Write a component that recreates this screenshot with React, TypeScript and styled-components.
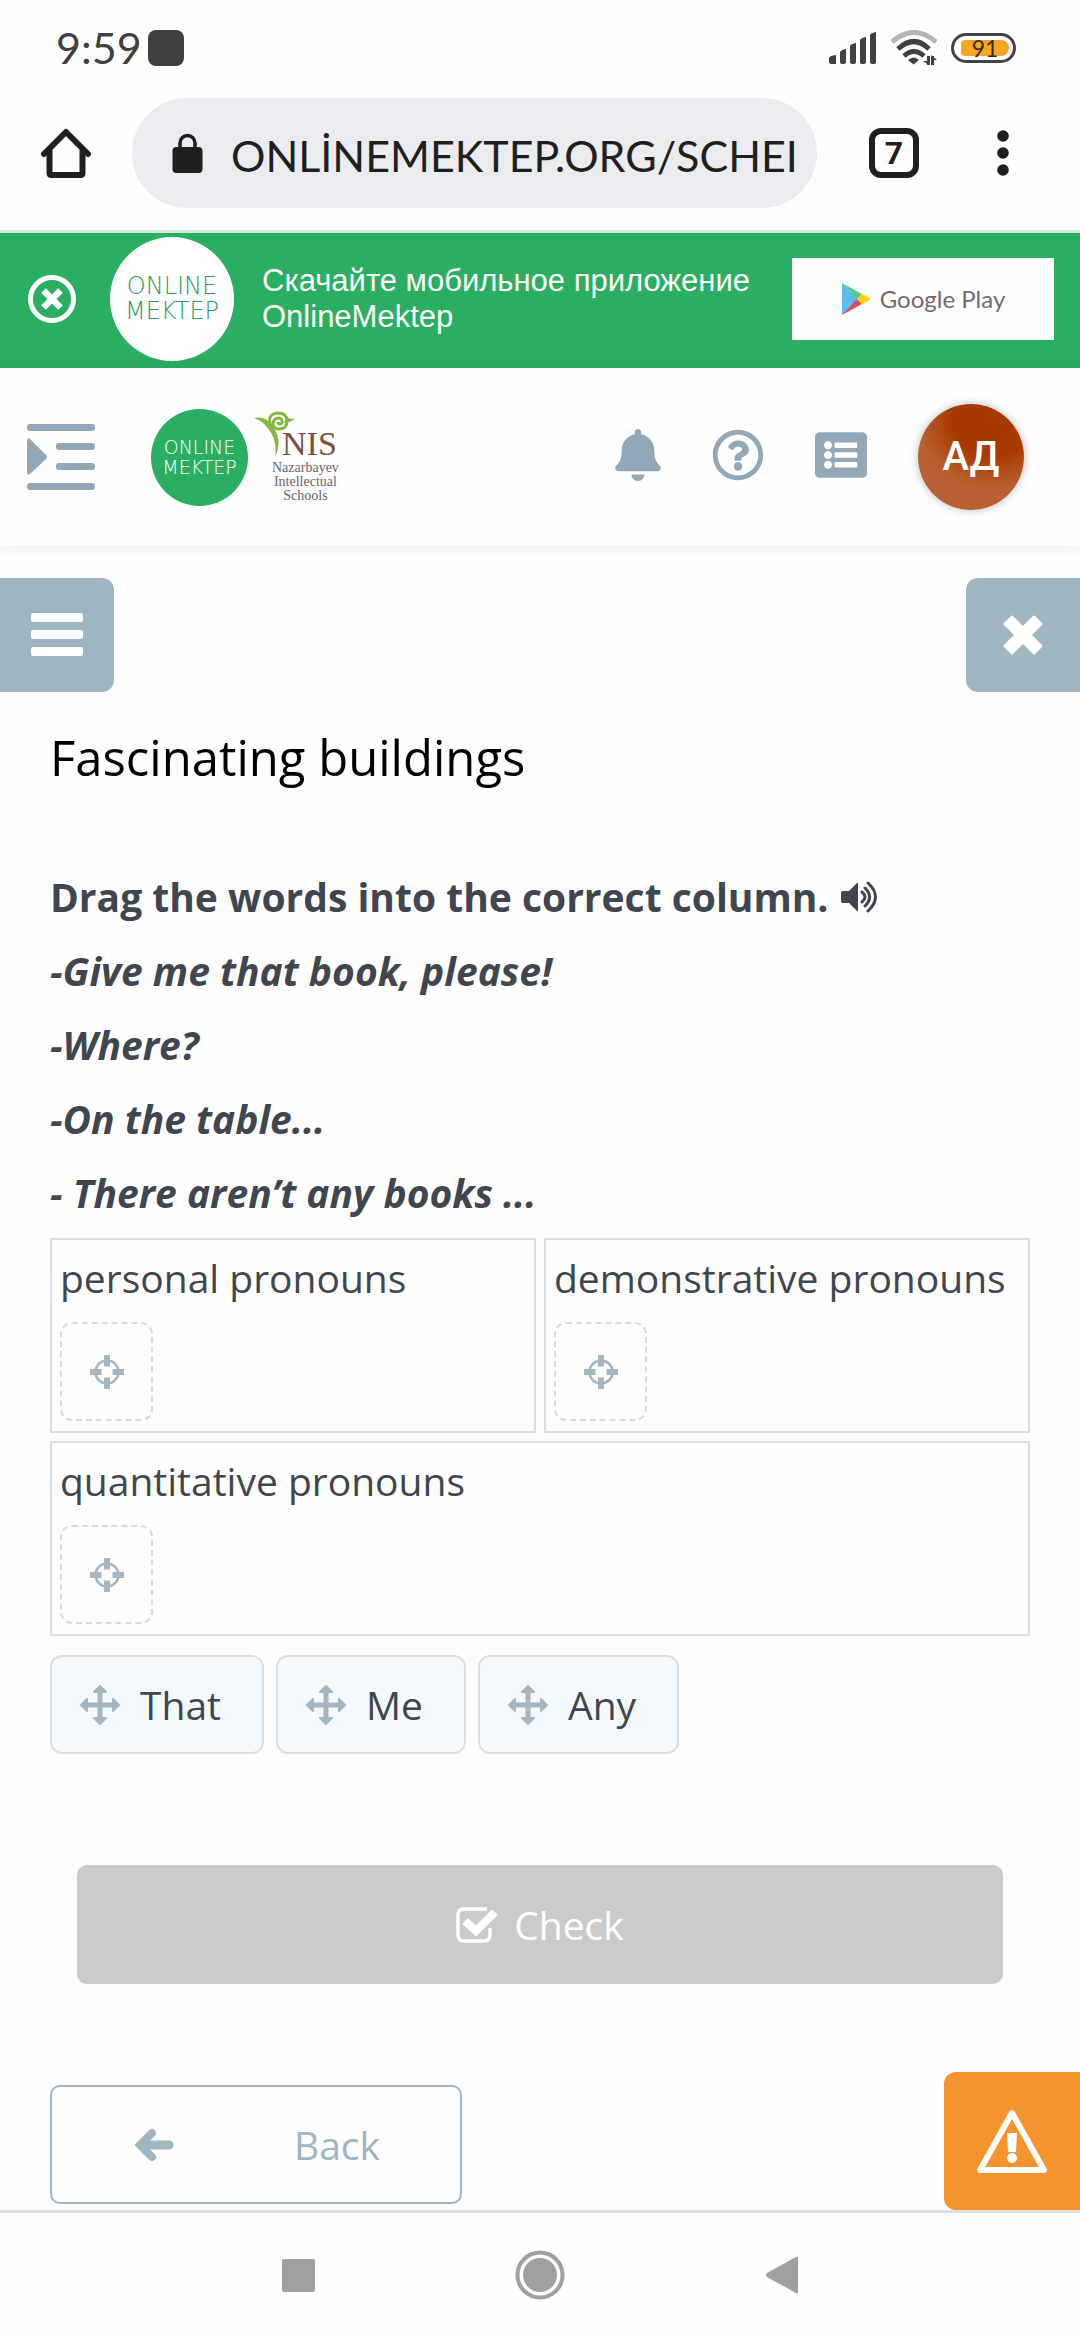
import React from "react";
import styled, { createGlobalStyle } from "styled-components";
import { FaBell, FaListAlt, FaRegQuestionCircle } from "react-icons/fa";

const uiFont = `"Open Sans", "Noto Sans", sans-serif`;

const GlobalStyle = createGlobalStyle`
  *, *::before, *::after { box-sizing: border-box; }
  body { margin: 0; background: #fefefe; font-family: ${uiFont}; color: #40464f; }
  button { font: inherit; color: inherit; border: 0; padding: 0; margin: 0; background: none; }
  p, h1, ul { margin: 0; padding: 0; }
  svg { display: block; flex: none; }
`;

const Screen = styled.div`
  display: flex;
  flex-direction: column;
  min-height: 100vh;
`;

const StatusBar = styled.div`
  display: flex;
  align-items: center;
  justify-content: space-between;
  height: 96px;
  padding: 0 64px 0 56px;
  color: #404040;
`;

const StatusGroup = styled.div<{ $gap: number }>`
  display: flex;
  align-items: center;
  gap: ${(p) => p.$gap}px;
`;

const Clock = styled.span`
  font-family: Lato, sans-serif;
  font-size: 43px;
  line-height: 48px;
`;

const BrowserBar = styled.div`
  display: flex;
  align-items: center;
  height: 134px;
  padding: 0 71px 20px 40px;
`;

const IconButton = styled.button`
  display: flex;
  align-items: center;
  justify-content: center;
`;

const AddressBar = styled.label`
  display: flex;
  align-items: center;
  gap: 28px;
  flex: 1;
  min-width: 0;
  height: 110px;
  margin: 0 52px 0 40px;
  padding: 0 20px 0 40px;
  border-radius: 55px;
  background: #ebecf0;
  color: #1f1f1f;
`;

const AddressInput = styled.input`
  flex: 1;
  min-width: 0;
  padding: 6px 0 0;
  border: 0;
  outline: 0;
  background: none;
  color: #1f1f1f;
  font-family: Lato, sans-serif;
  font-size: 43px;
  line-height: 48px;
`;

const TabsButton = styled(IconButton)`
  width: 50px;
  height: 50px;
  margin-right: 78px;
  border: 6px solid #1f1f1f;
  border-radius: 12px;
  color: #1f1f1f;
  font-family: Roboto, sans-serif;
  font-size: 32px;
  line-height: 36px;
  font-weight: 700;
`;

const Banner = styled.aside`
  display: flex;
  align-items: center;
  height: 138px;
  padding: 0 26px 4px 28px;
  border-top: 3px solid #d3ecdc;
  background: #2aae61;
  color: #ffffff;
`;

const LogoCircle = styled.div<{ $size: number; $inverse?: boolean }>`
  display: flex;
  flex-direction: column;
  align-items: center;
  justify-content: center;
  flex: none;
  width: ${(p) => p.$size}px;
  height: ${(p) => p.$size}px;
  border-radius: 50%;
  background: ${(p) => (p.$inverse ? "#2aae61" : "#ffffff")};
  color: ${(p) => (p.$inverse ? "#ffffff" : "#2f9a63")};
  font-family: "DejaVu Sans", sans-serif;
  font-weight: 200;
  font-size: ${(p) => (p.$size > 100 ? 24 : 19)}px;
  line-height: ${(p) => (p.$size > 100 ? 25 : 20)}px;
`;

const BannerLogo = styled(LogoCircle)`
  margin: 0 28px 0 34px;
`;

const BannerText = styled.p`
  flex: 1;
  font-family: "Liberation Sans", Arial, sans-serif;
  font-size: 31px;
  line-height: 36px;
`;

const PlayLink = styled.a`
  display: flex;
  align-items: center;
  justify-content: center;
  gap: 9px;
  width: 262px;
  height: 82px;
  background: #fdfefe;
  color: #77686c;
  font-family: Lato, sans-serif;
  font-size: 24px;
  line-height: 32px;
  text-decoration: none;
`;

const Header = styled.header`
  display: flex;
  align-items: center;
  height: 178px;
  padding: 0 56px 0 27px;
  background: #fefefe;
  box-shadow: 0 2px 16px rgba(0, 0, 0, 0.08);
  color: #92a8b9;
`;

const Brand = styled.div`
  display: flex;
  align-items: center;
  gap: 6px;
  margin-left: 56px;
`;

const NisLogo = styled.div`
  display: grid;
  grid-template-columns: 28px auto;
  align-items: end;
  font-family: "Liberation Serif", serif;
`;

const NisName = styled.span`
  color: #7a5040;
  font-size: 34px;
  line-height: 30px;
`;

const NisCaption = styled.span`
  grid-column: 1 / -1;
  padding: 2px 0 0 18px;
  color: #666666;
  font-size: 14px;
  line-height: 14px;
  text-align: center;
`;

const HeaderActions = styled.nav`
  display: flex;
  align-items: center;
  gap: 51px;
  margin-left: auto;
`;

const HeaderIcon = styled(IconButton)<{ $width: number }>`
  padding-bottom: 4px;

  svg {
    width: ${(p) => p.$width}px;
    height: 52px;
  }
`;

const Avatar = styled.button`
  width: 106px;
  height: 106px;
  border-radius: 50%;
  background: radial-gradient(circle at 70% 10%, #a83a00 0 35%, #b96132 62%);
  box-shadow: 0 0 8px rgba(60, 90, 120, 0.4);
  color: #ffffff;
  font-family: Roboto, sans-serif;
  font-weight: 500;
  font-size: 40px;
  line-height: 48px;
`;

const PanelControls = styled.div`
  display: flex;
  justify-content: space-between;
  margin-top: 32px;
`;

const PanelButton = styled(IconButton)<{ $side: "left" | "right" }>`
  width: 114px;
  height: 114px;
  border-radius: ${(p) => (p.$side === "left" ? "0 12px 12px 0" : "12px 0 0 12px")};
  background: #a0b5c2;
  color: #ffffff;
`;

const Lesson = styled.main`
  display: flex;
  flex-direction: column;
  padding: 30px 50px 0;
`;

const Title = styled.h1`
  color: #000000;
  font-size: 49px;
  line-height: 70px;
  font-weight: 400;
`;

const Prompt = styled.div`
  margin-top: 68px;
  font-size: 39px;
  line-height: 74px;
  font-weight: 700;
`;

const Instruction = styled.p`
  display: flex;
  align-items: center;
  gap: 12px;
`;

const Dialogue = styled.p`
  font-style: italic;
`;

const Columns = styled.div`
  display: grid;
  grid-template-columns: 1fr 1fr;
  gap: 8px;
  margin-top: 8px;
`;

const Column = styled.section<{ $wide?: boolean }>`
  grid-column: ${(p) => (p.$wide ? "1 / -1" : "auto")};
  padding: 8px 8px 10px;
  border: 2px solid #d8dfe1;
  font-size: 39px;
  line-height: 60px;
  white-space: nowrap;
`;

const Slot = styled.div`
  display: flex;
  align-items: center;
  justify-content: center;
  width: 93px;
  height: 99px;
  margin-top: 14px;
  border: 2px dashed #d9dcdf;
  border-radius: 12px;
  color: #a3b6c2;
`;

const Words = styled.div`
  display: flex;
  gap: 12px;
  margin-top: 19px;
`;

const Word = styled.button`
  display: flex;
  align-items: center;
  gap: 20px;
  height: 99px;
  padding: 0 41px 0 28px;
  border: 2px solid #d8dfe3;
  border-radius: 12px;
  background: #f4f9fd;
  color: #40464f;
  font-size: 39px;
  line-height: 60px;

  svg { color: #a3b6c2; }
`;

const CheckButton = styled.button`
  display: flex;
  align-items: center;
  justify-content: center;
  gap: 16px;
  height: 119px;
  margin: 111px 27px 0;
  border-radius: 10px;
  background: #cbcbcb;
  color: #ffffff;
  font-size: 39px;
  line-height: 60px;
`;

const Footer = styled.div`
  display: flex;
  align-items: flex-end;
  justify-content: space-between;
  margin-top: 88px;
  padding-left: 50px;
`;

const BackButton = styled.button`
  display: flex;
  align-items: center;
  justify-content: space-between;
  width: 412px;
  height: 119px;
  margin-bottom: 6px;
  padding: 0 80px 0 82px;
  border: 2px solid #a0b5c2;
  border-radius: 10px;
  color: #a0b5c2;
  font-size: 39px;
  line-height: 60px;
`;

const ReportButton = styled(IconButton)`
  width: 136px;
  height: 138px;
  border-radius: 12px 0 0 12px;
  background: #f5932f;
  color: #ffffff;
`;

const SystemNav = styled.nav`
  display: flex;
  align-items: flex-start;
  justify-content: center;
  flex: 1;
  gap: 192px;
  padding-top: 37px;
  border-top: 3px solid #dcdedf;
`;

const SignalIcon = () => (
  <svg width="48" height="32" viewBox="0 0 48 32" fill="currentColor">
    <path d="M0 26q0-2 7-3v9H2q-2 0-2-2zM11 20q1-2 6-3v13q0 2-2 2h-2q-2 0-2-2zM21 14q1-2 6-3v19q0 2-2 2h-2q-2 0-2-2zM31 8q1-2 6-3v25q0 2-2 2h-2q-2 0-2-2zM41 3q1-2 6-3v30q0 2-2 2h-2q-2 0-2-2z" />
  </svg>
);

const WifiIcon = () => (
  <svg width="46" height="36" viewBox="0 0 46 36" fill="none" stroke="currentColor" strokeWidth="5">
    <path d="M1 12q22-19 44 0" stroke="#b5b5b5" />
    <path d="M7 19q16-15 31 0" />
    <path d="M13 26q10-9 20 0" />
    <path d="M17 30q6-5 11 0l-5.500 4.500z" fill="currentColor" stroke="none" />
    <path d="M37.500 26v9M41.500 35v-9" strokeWidth="3" />
    <path d="M32 31h6v4zM46 30h-6v-5z" fill="currentColor" stroke="none" />
  </svg>
);

const Battery = styled.span`
  display: flex;
  width: 65px;
  height: 30px;
  padding: 4px;
  border: 3px solid #404448;
  border-radius: 15px;
`;

const BatteryLevel = styled.span`
  flex: 1;
  margin-left: 3px;
  border-radius: 4px 8px 8px 4px;
  background: #f5a623;
  color: #3a2a10;
  font-family: Lato, sans-serif;
  font-size: 23px;
  line-height: 16px;
  text-align: center;
`;

const StatusSquare = styled.span`
  width: 36px;
  height: 36px;
  border-radius: 8px;
  background: #404040;
`;

const HomeIcon = () => (
  <svg width="52" height="52" viewBox="0 0 52 52" fill="none" stroke="#1f1f1f" strokeWidth="6" strokeLinecap="round" strokeLinejoin="round">
    <path d="M4 27L26 5l22 22" />
    <path d="M9.500 24v22q0 2 2 2h29q2 0 2-2V24" />
  </svg>
);

const LockIcon = () => (
  <svg width="31" height="40" viewBox="0 0 31 40">
    <rect x="0.500" y="14" width="30" height="26" rx="4" fill="currentColor" />
    <path d="M8 16V10a7.500 7.500 0 0 1 15 0v6" fill="none" stroke="currentColor" strokeWidth="3.500" />
  </svg>
);

const MoreIcon = () => (
  <svg width="12" height="46" viewBox="0 0 12 46" fill="#1f1f1f">
    <circle cx="6" cy="6" r="5.800" />
    <circle cx="6" cy="23" r="5.800" />
    <circle cx="6" cy="40" r="5.800" />
  </svg>
);

const DismissIcon = () => (
  <svg width="48" height="48" viewBox="0 0 48 48" fill="none" stroke="#ffffff">
    <circle cx="24" cy="24" r="21.500" strokeWidth="5" />
    <path d="M15.500 15.500l17 17M32.500 15.500l-17 17" strokeWidth="6.500" />
  </svg>
);

const PlayIcon = () => (
  <svg width="30" height="34" viewBox="0 0 30 34">
    <path d="M1 1v32l16-16z" fill="#5cbcf2" />
    <path d="M1 1l20 11-5 5z" fill="#5fc887" />
    <path d="M1 33l20-11-5-5z" fill="#e24b56" />
    <path d="M21 11.500L30 17l-9 5.500-5-5.500z" fill="#fdd017" />
  </svg>
);

const IndentIcon = () => (
  <svg width="68" height="66" viewBox="0 0 68 66" fill="currentColor">
    <rect width="68" height="7" rx="3" />
    <rect x="29" y="19" width="39" height="7" rx="3" />
    <rect x="29" y="39" width="39" height="7" rx="3" />
    <rect y="59" width="68" height="7" rx="3" />
    <path d="M0 17q0-4 3-2l16 16q2 2 0 4L3 50q-3 2-3-2z" />
  </svg>
);

const SproutIcon = () => (
  <svg width="42" height="48" viewBox="0 0 42 48" fill="#84b840">
    <path d="M0 7q10-2 16 5 14 16 5 34 3-18-9-31Q8 10 0 7z" />
    <path d="M30 12q7 0 11-5-5 2-9-1z" />
    <path
      d="M17 16Q12 3 24 2q9 0 9 8 0 8-8 8-6 0-6-6 1-5 6-5 4 1 3 5-2 2-4 0"
      fill="none"
      stroke="#84b840"
      strokeWidth="3"
      strokeLinecap="round"
    />
  </svg>
);

const BarsIcon = () => (
  <svg width="52" height="44" viewBox="0 0 52 44" fill="currentColor">
    <rect width="52" height="9" rx="2" />
    <rect y="17" width="52" height="9" rx="2" />
    <rect y="34" width="52" height="9" rx="2" />
  </svg>
);

const CloseIcon = () => (
  <svg width="40" height="40" viewBox="0 0 40 40" fill="currentColor" stroke="currentColor" strokeWidth="3" strokeLinejoin="round">
    <path d="M9 2l11 11L31 2l7 7-11 11 11 11-7 7-11-11L9 38l-7-7 11-11L2 9z" />
  </svg>
);

const SpeakerIcon = () => (
  <svg width="37" height="32" viewBox="0 0 37 32" fill="none" stroke="currentColor" strokeWidth="3" strokeLinecap="round">
    <path d="M0 12q0-2 2-2h6l8-8q1-1 1 1v26q0 2-1 1l-8-8H2q-2 0-2-2z" fill="currentColor" stroke="none" />
    <path d="M21 11q6 5 0 10M24 7q9 9 0 18M27 2q15 14 0 28" />
  </svg>
);

const TargetIcon = () => (
  <svg width="34" height="34" viewBox="0 0 34 34" fill="none" stroke="currentColor">
    <circle cx="17" cy="17" r="11.500" strokeWidth="2.500" />
    <path d="M17 0v11.500M17 34V22.500M0 17h11.500M34 17H22.500" strokeWidth="6" />
  </svg>
);

const MoveIcon = () => (
  <svg width="40" height="40" viewBox="0 0 40 40" fill="currentColor" stroke="currentColor" strokeLinejoin="round">
    <path d="M20 5v30M5 20h30" strokeWidth="5" />
    <path
      d="M20 1l6 6H14zM20 39l6-6H14zM1 20l6-6v12zM39 20l-6-6v12z"
      strokeWidth="2"
    />
  </svg>
);

const CheckIcon = () => (
  <svg width="42" height="36" viewBox="0 0 42 36" fill="none" stroke="currentColor">
    <path d="M31 2H8Q2 2 2 8v20q0 6 6 6h20q6 0 6-6v-7" strokeWidth="3.500" />
    <path d="M9 14l11 10L39 5" strokeWidth="8" />
  </svg>
);

const ArrowLeftIcon = () => (
  <svg width="40" height="34" viewBox="0 0 40 34" fill="none" stroke="currentColor" strokeLinecap="round">
    <path d="M10 17h25" strokeWidth="9" />
    <path d="M18 5L6 17l12 12" strokeWidth="8" />
  </svg>
);

const WarningIcon = () => (
  <svg width="70" height="63" viewBox="0 0 70 63" fill="none" stroke="currentColor" strokeLinejoin="round">
    <path d="M35 3L67 60H3z" strokeWidth="6" />
    <path d="M30 23h10l-1 19h-8z" fill="currentColor" stroke="none" />
    <circle cx="35" cy="48" r="5" fill="currentColor" stroke="none" />
  </svg>
);

const lines = ["-Give me that book, please!", "-Where?", "-On the table...", "- There aren’t any books ..."];
const columns = [
  { label: "personal pronouns" },
  { label: "demonstrative pronouns" },
  { label: "quantitative pronouns", wide: true },
];
const words = ["That", "Me", "Any"];

export default function App() {
  return (
    <Screen>
      <GlobalStyle />
      <StatusBar>
        <StatusGroup $gap={6}>
          <Clock>9:59</Clock>
          <StatusSquare />
        </StatusGroup>
        <StatusGroup $gap={14}>
          <SignalIcon />
          <WifiIcon />
          <Battery><BatteryLevel>91</BatteryLevel></Battery>
        </StatusGroup>
      </StatusBar>
      <BrowserBar>
        <IconButton aria-label="Home"><HomeIcon /></IconButton>
        <AddressBar>
          <LockIcon />
          <AddressInput aria-label="Address" defaultValue="ONLİNEMEKTEP.ORG/SCHEI" />
        </AddressBar>
        <TabsButton aria-label="Open tabs">7</TabsButton>
        <IconButton aria-label="More"><MoreIcon /></IconButton>
      </BrowserBar>
      <Banner>
        <IconButton aria-label="Close banner"><DismissIcon /></IconButton>
        <BannerLogo $size={124}><span>ONLINE</span><span>MEKTEP</span></BannerLogo>
        <BannerText>Скачайте мобильное приложение OnlineMektep</BannerText>
        <PlayLink href="#play"><PlayIcon />Google Play</PlayLink>
      </Banner>
      <Header>
        <IconButton aria-label="Open sidebar"><IndentIcon /></IconButton>
        <Brand>
          <LogoCircle $size={97} $inverse><span>ONLINE</span><span>MEKTEP</span></LogoCircle>
          <NisLogo>
            <SproutIcon />
            <NisName>NIS</NisName>
            <NisCaption>Nazarbayev<br />Intellectual<br />Schools</NisCaption>
          </NisLogo>
        </Brand>
        <HeaderActions>
          <HeaderIcon $width={46} aria-label="Notifications"><FaBell /></HeaderIcon>
          <HeaderIcon $width={52} aria-label="Help"><FaRegQuestionCircle /></HeaderIcon>
          <HeaderIcon $width={52} aria-label="Journal"><FaListAlt /></HeaderIcon>
          <Avatar>АД</Avatar>
        </HeaderActions>
      </Header>
      <PanelControls>
        <PanelButton $side="left" aria-label="Contents"><BarsIcon /></PanelButton>
        <PanelButton $side="right" aria-label="Close"><CloseIcon /></PanelButton>
      </PanelControls>
      <Lesson>
        <Title>Fascinating buildings</Title>
        <Prompt>
          <Instruction>
            Drag the words into the correct column.
            <IconButton aria-label="Listen"><SpeakerIcon /></IconButton>
          </Instruction>
          {lines.map((line) => <Dialogue key={line}>{line}</Dialogue>)}
        </Prompt>
        <Columns>
          {columns.map((c) => (
            <Column key={c.label} $wide={c.wide}>
              <p>{c.label}</p>
              <Slot><TargetIcon /></Slot>
            </Column>
          ))}
        </Columns>
        <Words>
          {words.map((w) => <Word key={w}><MoveIcon />{w}</Word>)}
        </Words>
        <CheckButton><CheckIcon />Check</CheckButton>
      </Lesson>
      <Footer>
        <BackButton><ArrowLeftIcon />Back</BackButton>
        <ReportButton aria-label="Report a problem"><WarningIcon /></ReportButton>
      </Footer>
      <SystemNav>
        <IconButton aria-label="Recent apps">
          <svg width="50" height="50" viewBox="0 0 50 50" fill="#a0a0a0"><rect x="9" y="9" width="33" height="33" rx="2" /></svg>
        </IconButton>
        <IconButton aria-label="Home screen">
          <svg width="50" height="50" viewBox="0 0 50 50" fill="#a0a0a0">
            <circle cx="25" cy="25" r="22.500" fill="none" stroke="#a0a0a0" strokeWidth="4" />
            <circle cx="25" cy="25" r="17" />
          </svg>
        </IconButton>
        <IconButton aria-label="Go back">
          <svg width="50" height="50" viewBox="0 0 50 50" fill="#a0a0a0"><path d="M41 8v34q0 2-2 1L10 27q-2-2 0-4L39 7q2-1 2 1z" /></svg>
        </IconButton>
      </SystemNav>
    </Screen>
  );
}
